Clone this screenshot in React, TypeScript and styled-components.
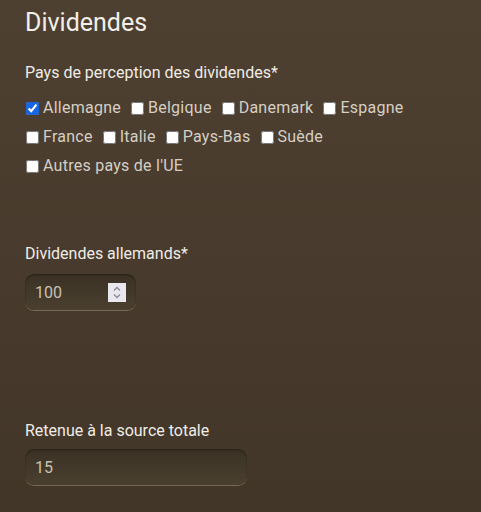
import { createGlobalStyle } from 'styled-components'
import styled from 'styled-components'

const GlobalStyle = createGlobalStyle`
  html, body {
    margin: 0;
    padding: 0;
    height: 100%;
  }
  body {
    background: linear-gradient(180deg, #4e4031 0%, #483b2d 50%, #423629 100%);
    font-family: Roboto, "Liberation Sans", sans-serif;
    color: #ebe6de;
  }
`

const Page = styled.div`
  display: flex;
  flex-direction: column;
  padding: 7px 25px 0;
  min-height: 512px;
  box-sizing: border-box;
`

const Title = styled.h1`
  margin: 0;
  font-size: 25px;
  font-weight: 400;
  line-height: 32px;
  color: #f2efea;
`

const Field = styled.div<{ $top: number }>`
  display: flex;
  flex-direction: column;
  margin-top: ${(p) => p.$top}px;
`

const Label = styled.div`
  font-size: 16px;
  line-height: 20px;
  color: #f0ece6;
`

const Options = styled.div`
  display: flex;
  flex-wrap: wrap;
  column-gap: 9px;
  row-gap: 9px;
  margin-top: 15px;
  max-width: 420px;
`

const Option = styled.label`
  display: flex;
  align-items: center;
  gap: 4px;
  font-size: 16px;
  line-height: 20px;
  letter-spacing: 0.25px;
  color: #d6cfc4;

  input {
    margin: 0 0 0 1px;
    width: 13px;
    height: 13px;
    accent-color: #1a66e0;
  }
`

const InputWrap = styled.div<{ $width: number; $gap: number }>`
  position: relative;
  margin-top: ${(p) => p.$gap}px;
  width: ${(p) => p.$width}px;
`

const NumberBox = styled.input`
  width: 100%;
  height: 36px;
  box-sizing: border-box;
  padding: 0 9px 0 10px;
  border: none;
  border-radius: 9px;
  background: linear-gradient(180deg, #3a3124 0%, #43392b 55%, #4b402f 100%);
  box-shadow: inset 0 1px 2px rgba(0, 0, 0, 0.35), 0 1px 0 rgba(160, 148, 120, 0.55);
  font-family: Roboto, "Liberation Sans", sans-serif;
  font-size: 16px;
  color: #c9c1b2;
  outline: none;
  -moz-appearance: textfield;

  &::-webkit-inner-spin-button,
  &::-webkit-outer-spin-button {
    -webkit-appearance: none;
    margin: 0;
  }
`

const Spinner = styled.span`
  position: absolute;
  top: 9px;
  right: 10px;
  width: 18px;
  height: 19px;
  background: #e9e8ee;
  display: flex;
  align-items: center;
  justify-content: center;
  pointer-events: none;
`

const countries = ['Allemagne', 'Belgique', 'Danemark', 'Espagne', 'France', 'Italie', 'Pays-Bas', 'Suède', "Autres pays de l'UE"]

export default function App() {
  return (
    <>
      <GlobalStyle />
      <Page>
        <Title>Dividendes</Title>
        <Field $top={24}>
          <Label>Pays de perception des dividendes*</Label>
          <Options>
            {countries.map((c) => (
              <Option key={c}>
                <input type="checkbox" defaultChecked={c === 'Allemagne'} />
                {c}
              </Option>
            ))}
          </Options>
        </Field>
        <Field $top={68}>
          <Label>Dividendes allemands*</Label>
          <InputWrap $width={111} $gap={10}>
            <NumberBox type="number" defaultValue={100} />
            <Spinner>
              <svg width="10" height="15" viewBox="0 0 10 15" fill="none" stroke="#8c8a9a" strokeWidth="1.3">
                <path d="M2 5.5 L5 2.5 L8 5.5" />
                <path d="M2 9.5 L5 12.5 L8 9.5" />
              </svg>
            </Spinner>
          </InputWrap>
        </Field>
        <Field $top={111}>
          <Label>Retenue à la source totale</Label>
          <InputWrap $width={222} $gap={8}>
            <NumberBox type="number" defaultValue={15} />
          </InputWrap>
        </Field>
      </Page>
    </>
  )
}
